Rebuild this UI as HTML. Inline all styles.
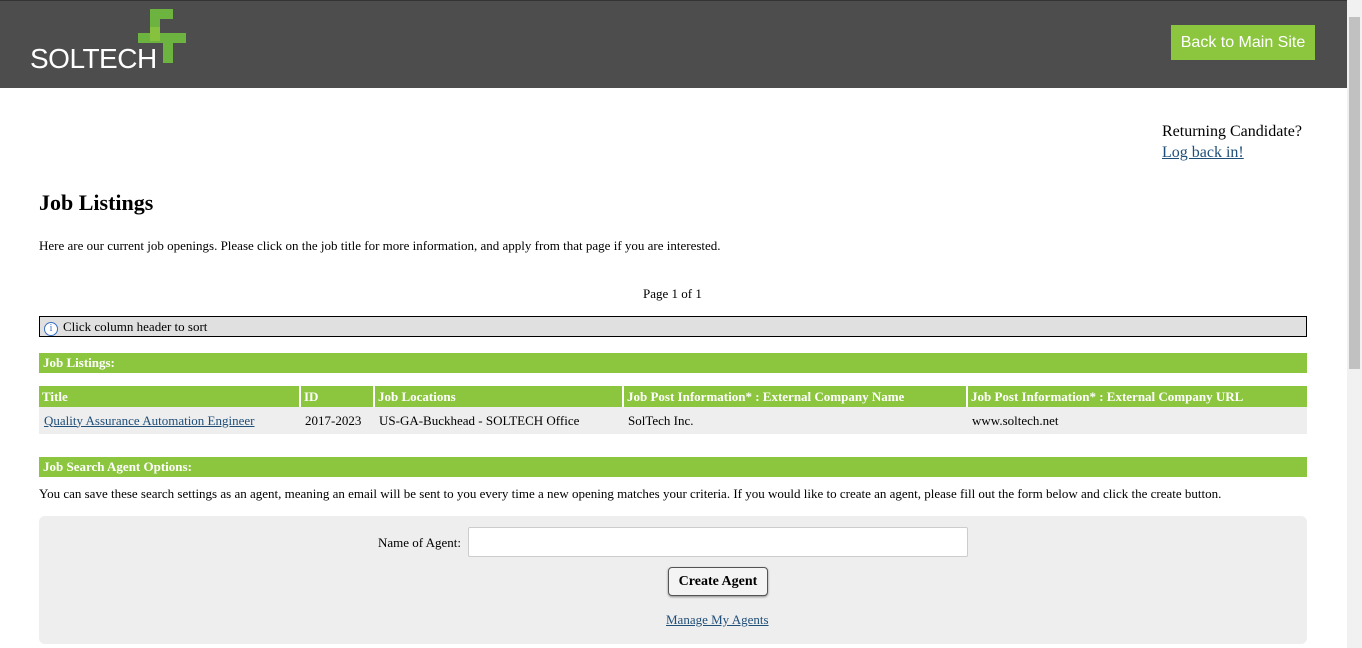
<!DOCTYPE html>
<html><head><meta charset="utf-8"><style>
body{margin:0;width:1362px;height:648px;overflow:hidden;font-family:"Liberation Serif",serif;font-size:13px;color:#000;background:#fff;position:relative}
.hdr{position:absolute;left:0;top:0;width:1347px;height:87px;background:#4d4d4d;border-top:1px solid #333}
.logo{position:absolute;left:30px;top:42px;color:#fff;font-family:"Liberation Sans",sans-serif;font-size:28px;letter-spacing:-0.5px}
.btn{position:absolute;left:1171px;top:24px;width:144px;height:35px;background:#8cc63f;color:#fff;font-family:"Liberation Sans",sans-serif;font-size:16px;line-height:35px;text-align:center}
.sb{position:absolute;left:1347px;top:0;width:15px;height:648px;background:#f1f1f1}
.sb div{position:absolute;left:2px;top:17px;width:11px;height:352px;background:#c1c1c1}
.abs{position:absolute}
a{color:#1f4e79}
.bar{position:absolute;left:39px;width:1268px;height:20px;background:#8cc63f;color:#fff;font-weight:bold;line-height:20px;text-indent:4px}
table{position:absolute;left:39px;top:386px;width:1268px;border-collapse:collapse;table-layout:fixed}
th{background:#8cc63f;color:#fff;text-align:left;height:21px;padding:0 3px;border-right:2px solid #fff;white-space:nowrap;overflow:hidden}
td{background:#eee;height:27px;padding:0 5px;white-space:nowrap}
</style></head><body>
<div class="hdr">
<svg class="abs" style="left:130px;top:6px" width="60" height="60"><g fill="#6db33f"><polygon points="20,2 43,2 43,12 30,12 30,34 20,34"/><polygon points="8,26 56,26 56,36 43,36 43,56 33,56 33,36 8,36"/></g><polygon points="20,20 30,20 30,34 20,34" fill="#8cc63f" opacity=".8"/></svg>
<div class="logo">SOLTECH</div>
<div class="btn">Back to Main Site</div>
</div>
<div class="sb"><div></div></div>
<div class="abs" style="left:1162px;top:121px;font-size:16px;line-height:21px">Returning Candidate?<br><a href="#">Log back in!</a></div>
<div class="abs" style="left:39px;top:190px;font-size:22px;font-weight:bold">Job Listings</div>
<div class="abs" style="left:39px;top:238px;font-size:13px">Here are our current job openings. Please click on the job title for more information, and apply from that page if you are interested.</div>
<div class="abs" style="left:643px;top:286px">Page 1 of 1</div>
<div class="abs" style="left:39px;top:316px;width:1266px;height:19px;border:1px solid #000;background:#e0e0e0;line-height:19px"><span style="display:inline-block;width:12px;height:12px;border:1px solid #3a6fc4;border-radius:50%;color:#3a6fc4;font-size:10px;line-height:12px;text-align:center;margin:0 5px 0 4px;vertical-align:0;background:#fff">i</span>Click column header to sort</div>
<div class="bar" style="top:353px">Job Listings:</div>
<table><colgroup><col style="width:261px"><col style="width:74px"><col style="width:249px"><col style="width:344px"><col></colgroup><tr><th>Title</th><th>ID</th><th>Job Locations</th><th>Job Post Information* : External Company Name</th><th style="border:0">Job Post Information* : External Company URL</th></tr>
<tr><td><a href="#">Quality Assurance Automation Engineer</a></td><td>2017-2023</td><td>US-GA-Buckhead - SOLTECH Office</td><td>SolTech Inc.</td><td>www.soltech.net</td></tr></table>
<div class="bar" style="top:457px">Job Search Agent Options:</div>
<div class="abs" style="left:39px;top:486px;font-size:13px;white-space:nowrap">You can save these search settings as an agent, meaning an email will be sent to you every time a new opening matches your criteria. If you would like to create an agent, please fill out the form below and click the create button.</div>
<div class="abs" style="left:39px;top:516px;width:1268px;height:128px;background:#eee;border-radius:6px">
<div class="abs" style="left:339px;top:19px">Name of Agent:</div>
<div class="abs" style="left:429px;top:11px;width:498px;height:28px;background:#fff;border:1px solid #ccc;border-radius:2px"></div>
<div class="abs" style="left:629px;top:51px;width:98px;height:27px;border:1px solid #555;border-radius:4px;background:#f4f4f4;text-align:center;line-height:27px;font-weight:bold;font-size:14px;box-shadow:0 1px 2px #888">Create Agent</div>
<div class="abs" style="left:627px;top:96px;font-size:13px"><a href="#">Manage My Agents</a></div>
</div>
</body></html>
